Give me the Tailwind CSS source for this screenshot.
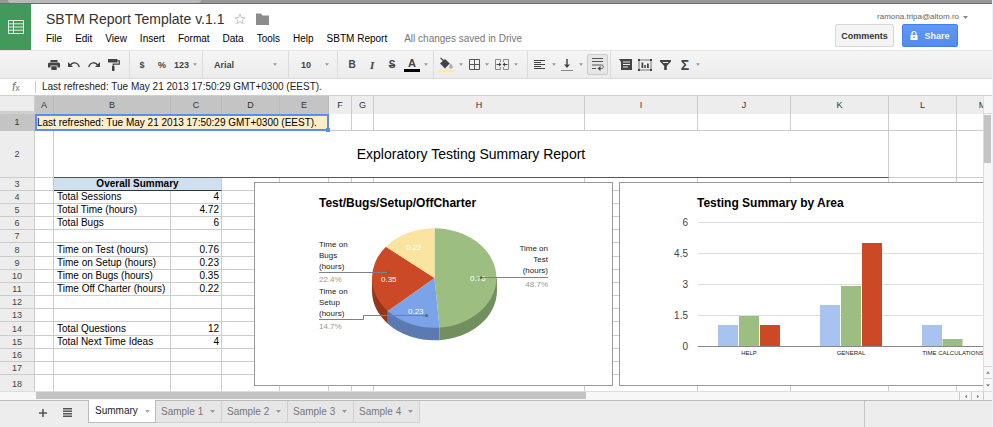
<!DOCTYPE html>
<html lang="en">
<head>
  <meta charset="UTF-8" />
  <meta name="viewport" content="width=device-width, initial-scale=1.0" />
  <title>SBTM Report Template v.1.1</title>
  <script src="https://cdn.jsdelivr.net/npm/@tailwindcss/browser@4"></script>
</head>
<body class="h-screen flex flex-col overflow-hidden bg-white border-r border-[#edf1f9] font-['Liberation_Sans',Arial,sans-serif] text-[10px] leading-3 text-black">

  <!-- Shared icons -->
  <svg class="hidden">
    <symbol id="caret" viewBox="0 0 5 3"><path d="M0 0h5L2.5 3z" fill="currentColor" /></symbol>
  </svg>

  <!-- Browser edge -->
  <div class="h-1 shrink-0 bg-[#989898] border-b border-[#6c6c6c] flex">
    <div class="ml-2 w-[193px] bg-[#b9b9b9] rounded-b-sm"></div>
  </div>

  <!-- Header -->
  <header class="h-[47px] shrink-0 flex border-b border-[#e3e3e3]">
    <a href="#" aria-label="Sheets home" class="w-[31px] bg-[#43985b] flex items-center justify-center">
      <svg class="w-4 h-[14px]" viewBox="0 0 16 14" fill="none" stroke="#e3f1e6"><path d="M.5.5h15v13H.5zM.5 3.8h15M.5 7h15M.5 10.2h15M5.5.5v13" /></svg>
    </a>
    <div class="pl-[15px] pt-[6px]">
      <div class="flex items-center gap-[10px]">
        <h1 class="text-[14px] leading-[18px] text-[#333]">SBTM Report Template v.1.1</h1>
        <button aria-label="Star"><svg class="w-3 h-3" viewBox="0 0 12 12" fill="none" stroke="#c4c4c4"><path d="M6 1l1.4 3.5 3.8.2-3 2.4 1 3.7L6 8.7l-3.200 2.100 1-3.700-3-2.400 3.800-.2z" /></svg></button>
        <button aria-label="Move to folder"><svg class="w-[13px] h-3" viewBox="0 0 13 12" fill="#8c8c8c"><path d="M0 .5h5l1.500 2H13V12H0z" /></svg></button>
      </div>
      <nav class="flex gap-[13px] pt-[5px]">
        <button>File</button>
        <button>Edit</button>
        <button>View</button>
        <button>Insert</button>
        <button>Format</button>
        <button>Data</button>
        <button>Tools</button>
        <button>Help</button>
        <button>SBTM Report</button>
        <span class="ml-1 text-[#777]">All changes saved in Drive</span>
      </nav>
    </div>
    <div class="ml-auto pt-[7px] pr-6 flex flex-col items-end">
      <button class="flex items-center gap-1 text-[8px] leading-3 text-[#666]">ramona.tripa@altom.ro <svg class="w-[5px] h-[3px] text-[#888]"><use href="#caret" /></svg></button>
      <div class="flex gap-2 pt-px pr-[10px] text-[9px] font-bold">
        <button class="h-[23px] w-[59px] border border-[#d8d8d8] rounded-xs bg-[#f4f4f4] text-[#333]">Comments</button>
        <button class="h-[23px] w-14 border border-[#3f80ea] rounded-xs bg-linear-to-b from-[#5f98fa] to-[#568be9] text-[#f0f5ff] flex items-center justify-center gap-[6px]">
          <svg class="w-2 h-[9px]" viewBox="0 0 8 9"><path d="M2 4V2.500a2 2 0 0 1 4 0V4" fill="none" stroke="#fff" stroke-width="1.200" /><path d="M.5 4h7v5h-7z" fill="#fff" /><circle cx="4" cy="6.300" r=".9" fill="#5b93f5" /></svg>
          Share
        </button>
      </div>
    </div>
  </header>

  <!-- Toolbar -->
  <div class="h-7 shrink-0 flex items-center bg-linear-to-b from-[#f5f5f5] to-[#ececec] border-b border-[#dadada] text-[#444] text-[9px] font-bold pl-11">
    <div class="h-full flex items-center pr-[5px] border-r border-[#dcdcdc]">
      <button aria-label="Print" class="w-5 flex justify-center"><svg class="w-3 h-[10px]" viewBox="0 0 12 10" fill="#444"><path d="M2.500 0h7v2h-7zM1.500 2.500h9a1.500 1.500 0 0 1 1.500 1.500v3.500H9.500V5.500h-7v2H0V4a1.500 1.500 0 0 1 1.500-1.500zM3.300 6.300h5.400V10H3.300z" /></svg></button>
      <button aria-label="Undo" class="w-5 flex justify-center"><svg class="w-3 h-[7px]" viewBox="0 0 12 7"><path d="M0 1v5h5z" fill="#444" /><path d="M2 4.500C4.500 1 9.500.5 11.300 6" fill="none" stroke="#444" stroke-width="1.500" /></svg></button>
      <button aria-label="Redo" class="w-5 flex justify-center"><svg class="w-3 h-[7px]" viewBox="0 0 12 7"><path d="M12 1v5H7z" fill="#444" /><path d="M10 4.500C7.500 1 2.500.5.700 6" fill="none" stroke="#444" stroke-width="1.500" /></svg></button>
      <button aria-label="Paint format" class="w-5 flex justify-center"><svg class="w-3 h-3" viewBox="0 0 12 12"><path d="M0 0h9.500v3.500H0zM4 7h2.500v5H4z" fill="#444" /><path d="M9.500 1.800h1.800v3.400H5.200V8" fill="none" stroke="#444" stroke-width="1.200" /></svg></button>
    </div>
    <div class="h-full flex items-center pl-[2px] pr-[5px] border-r border-[#dcdcdc]">
      <button class="w-5">$</button>
      <button class="w-5">%</button>
      <button class="flex items-center gap-1 pl-[2px]">123 <svg class="w-1 h-[3px] text-[#999]"><use href="#caret" /></svg></button>
    </div>
    <div class="h-full flex items-center pl-[11px] pr-[11px] border-r border-[#dcdcdc]">
      <select aria-label="Font" class="appearance-none w-[59px] font-bold"><option>Arial</option></select>
      <svg class="w-1 h-[3px] text-[#999]"><use href="#caret" /></svg>
    </div>
    <div class="h-full flex items-center pl-3 pr-2 border-r border-[#dcdcdc]">
      <select aria-label="Font size" class="appearance-none w-6 font-bold"><option>10</option></select>
      <svg class="w-1 h-[3px] text-[#999]"><use href="#caret" /></svg>
    </div>
    <div class="h-full flex items-center pl-1 pr-[5px] border-r border-[#dcdcdc]">
      <button class="w-5 text-[10px]">B</button>
      <button class="w-5 text-[11px] italic font-['Liberation_Serif',serif]">I</button>
      <button class="w-5 text-[10px] line-through">S</button>
      <button class="w-5 flex flex-col items-center text-[11px] leading-3"><span>A</span><span class="w-4 h-[3px] bg-black"></span></button>
      <svg class="ml-[2px] w-1 h-[3px] text-[#999]"><use href="#caret" /></svg>
    </div>
    <div class="h-full flex items-center gap-[6px] pl-1 pr-[9px] border-r border-[#dcdcdc]">
      <button aria-label="Fill color" class="flex items-center gap-[5px]">
        <svg class="w-4 h-4" viewBox="0 0 16 16"><path d="M0 13h16v2.500H0z" fill="#fdeaa8" /><path d="M2 6.500l5-4.500L11.800 6.500 7 11.500z" fill="#444" /><path d="M2.500 1l4 3.500" stroke="#444" stroke-width="1.200" /><path d="M12.800 6.500c2.500 3 2.500 5 0 5s-2-2 0-5z" fill="#aaa" /></svg>
        <svg class="w-1 h-[3px] text-[#999]"><use href="#caret" /></svg>
      </button>
      <button aria-label="Borders" class="flex items-center gap-[5px]">
        <svg class="w-[11px] h-[11px]" viewBox="0 0 11 11" fill="none" stroke="#555"><path d="M.5.5h10v10H.5zM5.500.5v10M.5 5.500h10" /></svg>
        <svg class="w-1 h-[3px] text-[#999]"><use href="#caret" /></svg>
      </button>
      <button aria-label="Merge cells" class="flex items-center gap-[5px]">
        <svg class="w-[14px] h-[11px]" viewBox="0 0 14 11" fill="none"><path d="M5.500 3V.5H.5v10h5V8M8.500 3V.5h5v10h-5V8" stroke="#888" /><path d="M1.500 5.500h3M9.500 5.500h3" stroke="#444" /><path d="M4 3.500l2.500 2-2.500 2zM10 3.500L7.500 5.500l2.500 2z" fill="#444" /></svg>
        <svg class="w-1 h-[3px] text-[#999]"><use href="#caret" /></svg>
      </button>
    </div>
    <div class="h-full flex items-center gap-[5px] pl-[6px] pr-[2px] border-r border-[#dcdcdc]">
      <button aria-label="Horizontal align" class="flex items-center gap-[6px]">
        <svg class="w-3 h-[10px]" viewBox="0 0 12 10" stroke="#444"><path d="M0 .5h11M0 2.500h7M0 4.500h11M0 6.500h7M0 8.500h11" /></svg>
        <svg class="w-1 h-[3px] text-[#999]"><use href="#caret" /></svg>
      </button>
      <button aria-label="Vertical align" class="flex items-center gap-[6px]">
        <svg class="w-3 h-3" viewBox="0 0 12 12"><path d="M0 11.500h12" stroke="#888" /><path d="M6 0v6" stroke="#444" stroke-width="1.500" /><path d="M3 5.500h6L6 9z" fill="#444" /></svg>
        <svg class="w-1 h-[3px] text-[#999]"><use href="#caret" /></svg>
      </button>
      <button aria-label="Wrap text" class="w-[21px] h-[21px] -ml-px border border-[#ccc] rounded-xs bg-[#e6e6e6] flex items-center justify-center">
        <svg class="w-3 h-[13px]" viewBox="0 0 12 13" fill="none" stroke="#555"><path d="M0 .5h11M0 3.500h11M0 10.500h4M0 7h9.500c2.500 0 2.500 3.500 0 3.500H7" /><path d="M8.500 8L5.500 10.500l3 2.500z" fill="#444" stroke="none" /></svg>
      </button>
    </div>
    <div class="h-full flex items-center pl-1">
      <button aria-label="Insert comment" class="w-5 flex justify-center"><svg class="w-[13px] h-[11px]" viewBox="0 0 13 11"><path d="M0 0h13v11H2V3z" fill="#444" /><path d="M4 3h7M4 5.500h7M4 8h5" stroke="#eee" /></svg></button>
      <button aria-label="Insert chart" class="w-5 flex justify-center"><svg class="w-[14px] h-3" viewBox="0 0 14 12"><path d="M1 1h12v10H1z" fill="none" stroke="#777" /><path d="M0 0h2v2H0zM12 0h2v2h-2zM0 10h2v2H0zM12 10h2v2h-2zM3.500 3.500h1.800V9H3.500zM6.300 6h1.500v3H6.300zM9 4.500h1.800V9H9z" fill="#444" /></svg></button>
      <button aria-label="Filter" class="w-5 flex justify-center"><svg class="w-[11px] h-[10px]" viewBox="0 0 11 10"><path d="M0 0h11v1.500L6.800 6v4H4.200V6L0 1.500z" fill="#444" /><path d="M2.800 2.500h5.400" stroke="#eee" /></svg></button>
      <button class="w-5 text-[14px]">Σ</button>
      <svg class="ml-[1px] w-1 h-[3px] text-[#999]"><use href="#caret" /></svg>
    </div>
  </div>

  <!-- Formula bar -->
  <div class="h-[17px] shrink-0 flex items-center border-b border-[#cfcfcf]">
    <label for="formula" class="w-[35px] pl-3 text-[12px] leading-4 italic text-[#777]">f<span class="text-[9px] not-italic">x</span></label>
    <input id="formula" type="text" value="Last refreshed: Tue May 21 2013 17:50:29 GMT+0300 (EEST)." class="flex-1 h-3 pl-[6px] border-l border-[#ccc] outline-none text-[#222]" />
  </div>

  <!-- Sheet -->
  <div class="flex-1 min-h-0 flex">
    <main class="relative flex-1 min-w-0 overflow-hidden">
      <table class="w-[1009px] table-fixed border-separate border-spacing-0">
        <colgroup>
          <col class="w-[35px]" />
          <col class="w-[19px]" />
          <col class="w-[117px]" />
          <col class="w-[51px]" />
          <col class="w-[58px]" />
          <col class="w-[49px]" />
          <col class="w-[23px]" />
          <col class="w-[22px]" />
          <col class="w-[211px]" />
          <col class="w-[113px]" />
          <col class="w-[93px]" />
          <col class="w-[98px]" />
          <col class="w-[68px]" />
          <col />
        </colgroup>
        <thead>
          <tr id="columns" class="h-[18px] text-[9px] text-[#333]">
            <th class="p-0 bg-[#ededed] border-r border-b-3 border-[#cfcfcf]"></th>
          </tr>
        </thead>
        <tbody id="cells">
          <tr class="h-[17px]">
            <th class="p-0 bg-[#c4c4c4] border-r border-b border-[#c4c4c4] text-[9px] font-normal text-[#333]">1</th>
            <td colspan="5" class="relative p-0 bg-[#fdeecb] border-2 border-[#5b8def] align-bottom whitespace-nowrap">Last refreshed: Tue May 21 2013 17:50:29 GMT+0300 (EEST).<span class="absolute -right-[3px] -bottom-[3px] w-1 h-1 bg-[#5b8def]"></span></td>
            <td class="border-r border-b border-[#ccc]"></td>
            <td class="border-r border-b border-[#ccc]"></td>
            <td class="border-r border-b border-[#ccc]"></td>
            <td class="border-r border-b border-[#ccc]"></td>
            <td class="border-r border-b border-[#ccc]"></td>
            <td class="border-r border-b border-[#ccc]"></td>
            <td class="border-r border-b border-[#ccc]"></td>
            <td class="border-r border-b border-[#ccc]"></td>
          </tr>
          <tr class="h-[47px]">
            <th class="p-0 bg-[#ededed] border-r border-b border-[#ccc] text-[9px] font-normal text-[#444]">2</th>
            <td class="border-r border-b border-[#ccc]"></td>
            <td colspan="10" class="p-0 border-r border-b border-r-[#ccc] border-b-[#555] text-center text-[14px]">Exploratory Testing Summary Report</td>
            <td class="border-r border-b border-[#ccc]"></td>
            <td class="border-r border-b border-[#ccc]"></td>
          </tr>
          <tr class="h-[13px]">
            <th class="p-0 bg-[#ededed] border-r border-b border-[#ccc] text-[9px] font-normal text-[#444]">3</th>
            <td class="p-0 border-r border-b border-[#ccc]"></td>
            <th colspan="2" class="p-0 bg-[#cfe0f1] border-r border-b border-r-[#ccc] border-b-[#333] font-bold">Overall Summary</th>
            <td class="p-0 border-r border-b border-[#ccc]"></td>
            <td class="p-0 border-r border-b border-[#ccc]"></td>
            <td class="p-0 border-r border-b border-[#ccc]"></td>
            <td class="p-0 border-r border-b border-[#ccc]"></td>
            <td class="p-0 border-r border-b border-[#ccc]"></td>
            <td class="p-0 border-r border-b border-[#ccc]"></td>
            <td class="p-0 border-r border-b border-[#ccc]"></td>
            <td class="p-0 border-r border-b border-[#ccc]"></td>
            <td class="p-0 border-r border-b border-[#ccc]"></td>
            <td class="p-0 border-r border-b border-[#ccc]"></td>
          </tr>
        </tbody>
      </table>

      <!-- Pie chart -->
      <div class="absolute left-[254px] top-[86px] w-[359px] h-[204px] bg-white border border-[#999]">
        <svg class="w-full h-full text-[8px]" viewBox="0 0 357 202">
          <text x="64" y="24" class="text-[12px] font-bold">Test/Bugs/Setup/OffCharter</text>
          <g transform="translate(179.500 95)">
            <path d="M62.500 0V12.600A62.500 49.800 0 0 1 5 62.200V49.600z" fill="#748f5f" />
            <path d="M5 49.600V62.200A62.500 49.800 0 0 1-46.700 45.700V33.100z" fill="#5b7bb0" />
            <path d="M-46.700 33.100V45.700A62.500 49.800 0 0 1-62.500 12.600V0z" fill="#963619" />
            <path d="M0 0V-49.800A62.500 49.800 0 0 1 5 49.600z" fill="#9cbe80" />
            <path d="M0 0L5 49.600A62.500 49.800 0 0 1-46.700 33.100z" fill="#7ba3e9" />
            <path d="M0 0L-46.700 33.100A62.500 49.800 0 0 1-48.600-31.300z" fill="#cb4925" />
            <path d="M0 0L-48.600-31.300A62.500 49.800 0 0 1 0-49.800z" fill="#fbe3a0" />
          </g>
          <g fill="#fff">
            <text x="151" y="67">0.22</text>
            <text x="126" y="99">0.35</text>
            <text x="153" y="131">0.23</text>
            <text x="215" y="98">0.76</text>
          </g>
          <g fill="none" stroke="#808080">
            <path d="M64 89.500H133" />
            <path d="M64 136.500H108.500V132.500H171" />
            <path d="M226 94.500H293" />
          </g>
          <g fill="#666">
            <circle cx="133.500" cy="89.500" r="1.500" />
            <circle cx="171.500" cy="132.500" r="1.500" />
            <circle cx="226" cy="94.500" r="1.500" />
          </g>
          <g fill="#222">
            <text x="64" y="64">Time on</text>
            <text x="64" y="75">Bugs</text>
            <text x="64" y="86">(hours)</text>
            <text x="64" y="111">Time on</text>
            <text x="64" y="122">Setup</text>
            <text x="64" y="133">(hours)</text>
            <text x="293" y="68" text-anchor="end">Time on</text>
            <text x="293" y="79" text-anchor="end">Test</text>
            <text x="293" y="90" text-anchor="end">(hours)</text>
          </g>
          <g fill="#999">
            <text x="64" y="99">22.4%</text>
            <text x="64" y="146">14.7%</text>
            <text x="293" y="104" text-anchor="end">48.7%</text>
          </g>
        </svg>
      </div>

      <!-- Bar chart -->
      <div class="absolute left-[619px] top-[86px] w-[420px] h-[204px] bg-white border border-[#999]">
        <svg class="w-full h-full" viewBox="0 0 418 202">
          <text x="77" y="24" class="text-[12px] font-bold">Testing Summary by Area</text>
          <path d="M78 39.500H418M78 70.500H418M78 101.500H418M78 132.500H418" stroke="#dedede" />
          <g class="text-[10px]" fill="#444" text-anchor="end">
            <text x="68" y="43">6</text>
            <text x="68" y="74">4.5</text>
            <text x="68" y="105">3</text>
            <text x="68" y="136">1.5</text>
            <text x="68" y="167">0</text>
          </g>
          <path d="M98 142h20v21H98zM200 122h20v41h-20zM302 142h20v21h-20z" fill="#a9c3f0" />
          <path d="M119 133h20v30h-20zM221 103h20v60h-20zM322.500 156h20v7h-20z" fill="#9cbe80" />
          <path d="M140 142h20v21h-20zM242 60h20v103h-20z" fill="#cb4925" />
          <path d="M78 163.500H418" stroke="#888" />
          <g class="text-[6px]" fill="#222" text-anchor="middle">
            <text x="129" y="172">HELP</text>
            <text x="231" y="172">GENERAL</text>
            <text x="333" y="172">TIME CALCULATIONS</text>
          </g>
        </svg>
      </div>
    </main>

    <!-- Vertical scrollbar -->
    <div class="w-[9px] flex flex-col bg-[#f7f7f7] border-l border-[#ddd] text-[#888]">
      <div class="h-[18px] border-b border-[#ddd]"></div>
      <div class="mt-px h-12 w-[7px] bg-[#c4c4c4]"></div>
      <button aria-label="Scroll up" class="mt-auto h-3 flex items-center justify-center border-t border-[#d5d5d5]"><svg class="w-1 h-[3px] rotate-180"><use href="#caret" /></svg></button>
      <button aria-label="Scroll down" class="h-[13px] flex items-center justify-center border-t border-[#d5d5d5]"><svg class="w-1 h-[3px]"><use href="#caret" /></svg></button>
    </div>
  </div>

  <!-- Horizontal scrollbar -->
  <div class="h-[9px] shrink-0 flex bg-[#f7f7f7] border-t border-[#ddd] pl-9 text-[#888]">
    <div class="w-[550px] h-[7px] bg-[#c4c4c4]"></div>
    <button aria-label="Scroll left" class="ml-auto w-3 flex items-center justify-center border-l border-[#ccc]"><svg class="w-1 h-[3px] rotate-90"><use href="#caret" /></svg></button>
    <button aria-label="Scroll right" class="w-[13px] flex items-center justify-center border-x border-[#ccc]"><svg class="w-1 h-[3px] -rotate-90"><use href="#caret" /></svg></button>
    <div class="w-2"></div>
  </div>

  <!-- Sheet tabs -->
  <footer class="h-[27px] shrink-0 flex items-start bg-[#ededed] border-t border-[#bbb] text-[#777]">
    <div class="w-[88px] h-[23px] flex items-center pl-[39px] gap-4">
      <button aria-label="Add sheet"><svg class="w-2 h-2" viewBox="0 0 8 8"><path d="M3.200 0h1.600v8H3.200zM0 3.200h8v1.600H0z" fill="#555" /></svg></button>
      <button aria-label="All sheets"><svg class="w-[9px] h-[9px]" viewBox="0 0 9 9"><path d="M0 0h9v1.500H0zM0 2.500h9V4H0zM0 5h9v1.500H0zM0 7.500h9V9H0z" fill="#555" /></svg></button>
    </div>
    <button class="-mt-px h-[23px] w-[68px] pl-[6px] flex items-center gap-[7px] bg-white border-x border-b border-[#bbb] text-[#222]">Summary <svg class="w-[5px] h-[3px] text-[#aaa]"><use href="#caret" /></svg></button>
    <button class="h-[22px] w-[66px] pl-[5px] flex items-center gap-[7px] bg-[#e6e6e6] border-r border-b border-[#d0d0d0]">Sample 1 <svg class="w-[5px] h-[3px] text-[#999]"><use href="#caret" /></svg></button>
    <button class="h-[22px] w-[66px] pl-[5px] flex items-center gap-[7px] bg-[#e6e6e6] border-r border-b border-[#d0d0d0]">Sample 2 <svg class="w-[5px] h-[3px] text-[#999]"><use href="#caret" /></svg></button>
    <button class="h-[22px] w-[66px] pl-[5px] flex items-center gap-[7px] bg-[#e6e6e6] border-r border-b border-[#d0d0d0]">Sample 3 <svg class="w-[5px] h-[3px] text-[#999]"><use href="#caret" /></svg></button>
    <button class="h-[22px] w-[66px] pl-[5px] flex items-center gap-[7px] bg-[#e6e6e6] border-r border-b border-[#d0d0d0]">Sample 4 <svg class="w-[5px] h-[3px] text-[#999]"><use href="#caret" /></svg></button>
    <div class="ml-auto w-32 h-full border-l border-[#c4c4c4]"></div>
  </footer>

  <script>
    // Column letters, A to E are part of the selection
    const columns = document.getElementById('columns');
    'ABCDEFGHIJKLM'.split('').forEach((letter, i) => {
      const th = document.createElement('th');
      th.className = i < 5
        ? 'p-0 font-normal bg-[#c4c4c4] border-r border-[#bbb]'
        : 'p-0 font-normal bg-[#ededed] border-r border-[#ccc]';
      th.textContent = letter;
      columns.appendChild(th);
    });

    const rows = [
      { label: 'Total Sessions', value: '4' },
      { label: 'Total Time (hours)', value: '4.72' },
      { label: 'Total Bugs', value: '6' },
      {},
      { label: 'Time on Test (hours)', value: '0.76', tall: true },
      { label: 'Time on Setup (hours)', value: '0.23' },
      { label: 'Time on Bugs (hours)', value: '0.35' },
      { label: 'Time Off Charter (hours)', value: '0.22' },
      {},
      {},
      { label: 'Total Questions', value: '12', tall: true },
      { label: 'Total Next Time Ideas', value: '4' },
      {},
      {},
      { last: true },
    ];

    const cells = document.getElementById('cells');
    rows.forEach((row, i) => {
      const tr = document.createElement('tr');
      tr.className = row.last ? 'h-[18px]' : row.tall ? 'h-[14px]' : 'h-[13px]';
      tr.innerHTML = `
        <th class="p-0 bg-[#ededed] border-r border-b border-[#ccc] text-[9px] font-normal text-[#444]">${i + 4}</th>
        <td class="p-0 border-r border-b border-[#ccc]"></td>
        <td class="p-0 pl-[3px] border-r border-b border-[#ccc] whitespace-nowrap">${row.label || ''}</td>
        <td class="p-0 pr-[2px] border-r border-b border-[#ccc] text-right">${row.value || ''}</td>
        ${'<td class="p-0 border-r border-b border-[#ccc]"></td>'.repeat(10)}
      `;
      cells.appendChild(tr);
    });
  </script>
</body>
</html>
